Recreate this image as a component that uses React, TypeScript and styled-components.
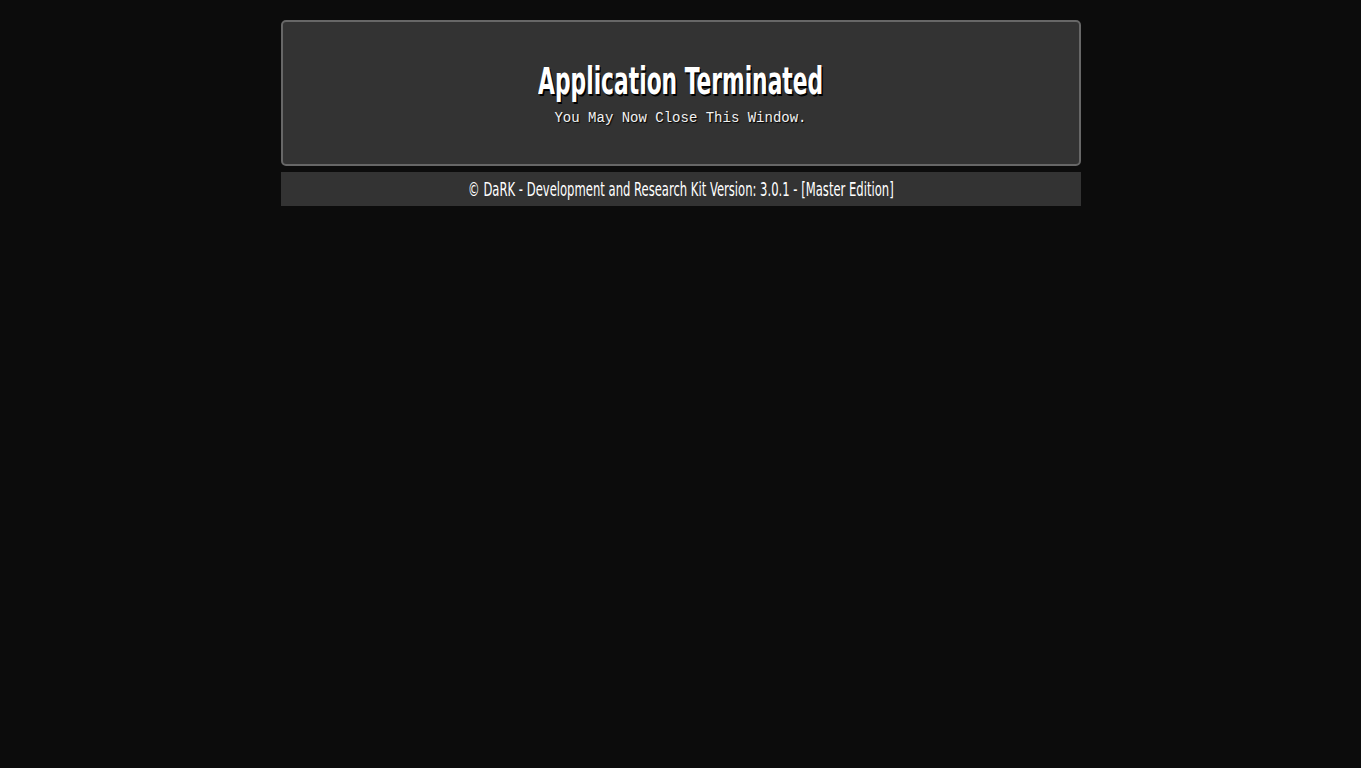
import React from "react";
import styled, { createGlobalStyle } from "styled-components";

const Global = createGlobalStyle`
  html, body { margin: 0; padding: 0; background: #0c0c0c; }
  body { font-family: "Liberation Sans", Arial, sans-serif; color: #fff; min-height: 768px; }
`;

const Page = styled.main`
  display: flex;
  flex-direction: column;
  align-items: center;
  gap: 6px;
  padding-top: 20px;
`;

const Card = styled.section`
  box-sizing: border-box;
  width: 800px;
  height: 146px;
  background: #333333;
  border: 2px solid #676767;
  border-radius: 5px;
  display: flex;
  flex-direction: column;
  align-items: center;
  padding-top: 40px;
`;

const Title = styled.h1`
  margin: 0;
  font-family: "DejaVu Sans Condensed", "Liberation Sans", sans-serif;
  font-weight: 700;
  font-size: 37px;
  line-height: 40px;
  color: #ffffff;
  text-shadow: 2px 2px 0 #000;
  display: inline-block;
  transform: scaleX(0.655);
  white-space: nowrap;
`;

const Subtitle = styled.p`
  margin: 7px 0 0;
  font-family: "Liberation Mono", "DejaVu Sans Mono", monospace;
  font-size: 14px;
  line-height: 18px;
  color: #f2f2f2;
  text-shadow: 1px 1px 1px #000;
`;

const Footer = styled.footer`
  box-sizing: border-box;
  width: 800px;
  height: 34px;
  background: #333333;
  display: flex;
  align-items: center;
  justify-content: center;
`;

const FooterText = styled.span`
  font-family: "DejaVu Sans Condensed", "Liberation Sans", sans-serif;
  font-size: 20px;
  color: #ffffff;
  display: inline-block;
  transform: scaleX(0.645);
  white-space: nowrap;
`;

export default function App() {
  return (
    <>
      <Global />
      <Page>
        <Card>
          <Title>Application Terminated</Title>
          <Subtitle>You May Now Close This Window.</Subtitle>
        </Card>
        <Footer>
          <FooterText>© DaRK - Development and Research Kit Version: 3.0.1 - [Master Edition]</FooterText>
        </Footer>
      </Page>
    </>
  );
}
